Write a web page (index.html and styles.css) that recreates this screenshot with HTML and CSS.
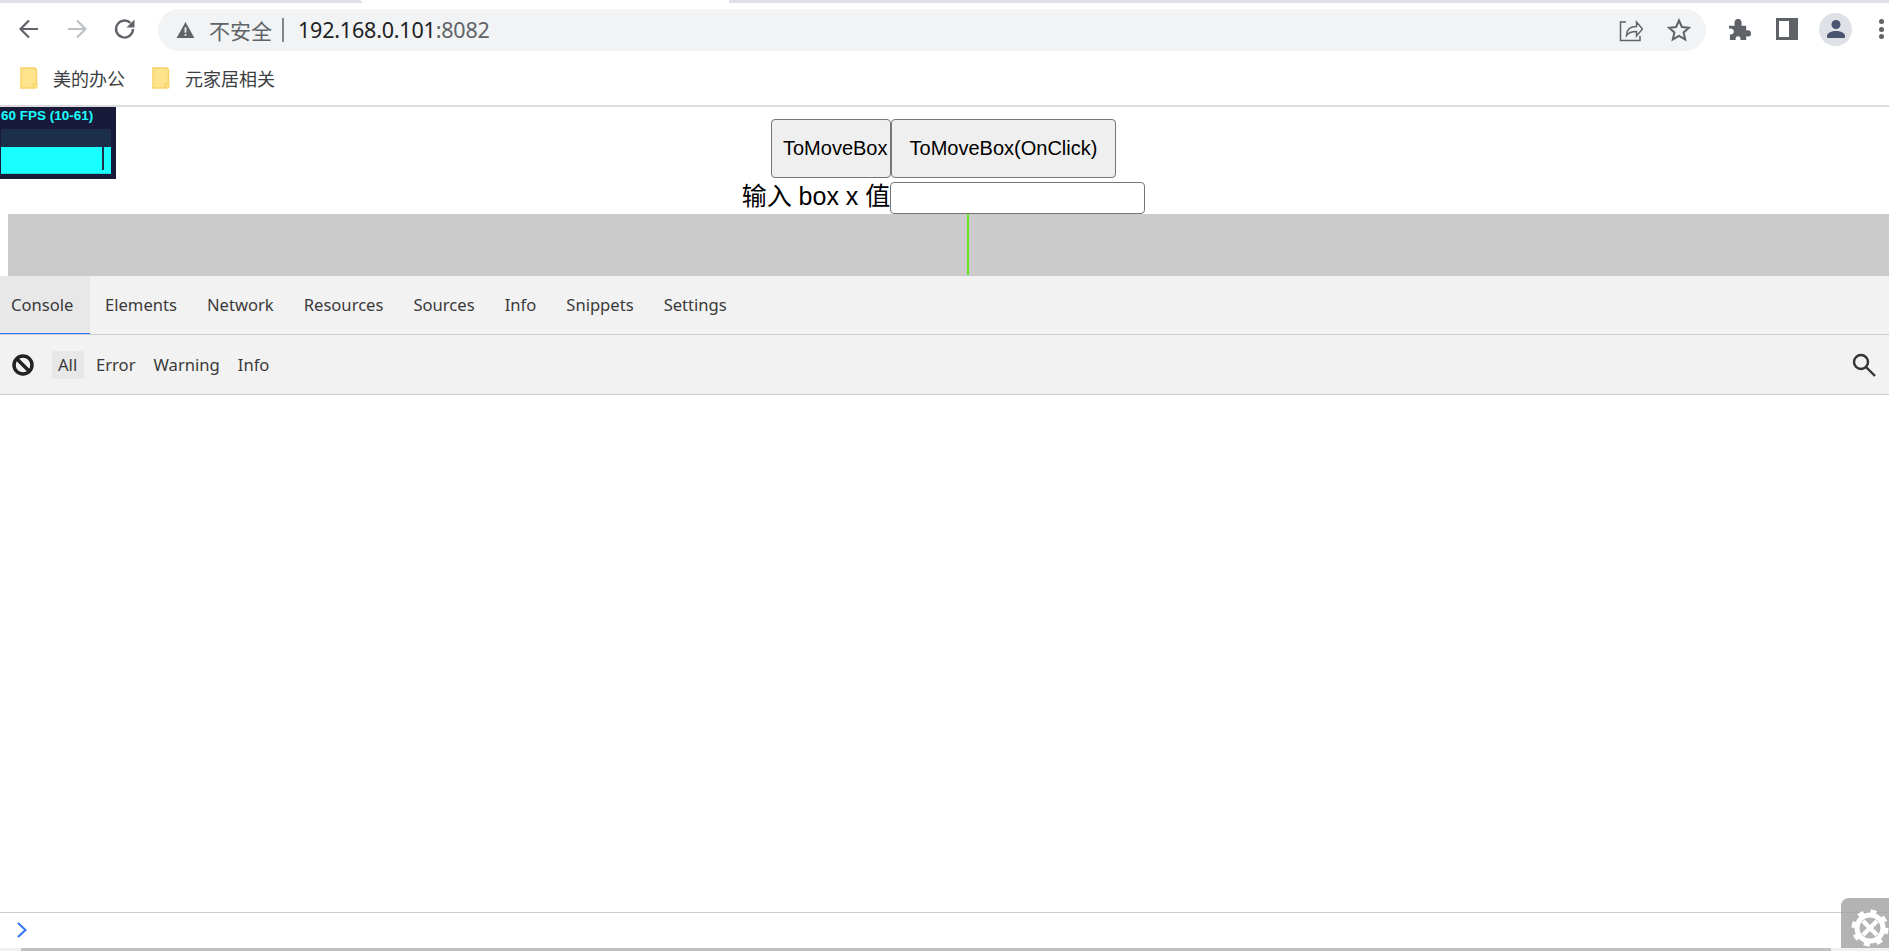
FILE: index.html
```html
<!DOCTYPE html>
<html lang="zh-CN">
<head>
<meta charset="utf-8">
<title>192.168.0.101:8082</title>
<link rel="stylesheet" href="styles.css">
</head>
<body>
<header class="browser">
  <div class="tabstrip"><div class="tab-active"></div></div>
  <div class="toolbar">
    <div class="nav">
      <svg class="ico" viewBox="0 0 24 24"><path d="M21 12H4M12 3.500 3.500 12l8.500 8.500" fill="none" stroke="#5f6368" stroke-width="2.200"/></svg>
      <svg class="ico" viewBox="0 0 24 24"><path d="M3 12h17M12 3.500l8.500 8.500-8.500 8.500" fill="none" stroke="#bdc1c6" stroke-width="2.200"/></svg>
      <svg class="ico" viewBox="0 0 24 24"><path d="M20 12a8.500 8.500 0 1 1-2.500-6" fill="none" stroke="#5f6368" stroke-width="2.300"/><path d="M21.500 2.500v8h-8z" fill="#5f6368"/></svg>
    </div>
    <div class="omnibox">
      <svg class="warn" viewBox="0 0 20 18"><path d="M10 0 20 18H0z" fill="#5f6368"/><path d="M9 6h2v6H9zM9 13.500h2v2H9z" fill="#f1f3f4"/></svg>
      <span class="insecure">不安全</span>
      <span class="sep"></span>
      <span class="url">192.168.0.101<span class="port">:8082</span></span>
      <span class="spacer"></span>
      <svg class="omni-ico" viewBox="0 0 24 24"><path d="M7 4H1.500v18.500h19.500V18M7.500 17.500c0-6 4-9 10-9V4l6 7-6 7v-4.500c-4.500 0-8 1-10 4z" fill="none" stroke="#5f6368" stroke-width="1.500"/></svg>
      <svg class="omni-ico star" viewBox="0 0 24 24"><path d="M12 2.500l2.900 6.500 7.100.7-5.400 4.700 1.600 7L12 17.800 5.800 21.400l1.600-7L2 9.700 9.100 9z" fill="none" stroke="#5f6368" stroke-width="2"/></svg>
    </div>
    <div class="actions">
      <svg class="puzzle" viewBox="0 0 24 24"><path d="M1 8h6C6 3 8 1 10.500 1S15 3 14 8h5v5c4-1 5 1 5 3.500S23 20 19 19v4h-6c.5-3-1-4-2.500-4S7.500 20 8 23H2v-6c3 .5 4-1 4-3s-2-3.500-5-3z" fill="#5f6368"/></svg>
      <svg class="panel" viewBox="0 0 22 22"><path d="M0 0h22v22H0z" fill="#5f6368"/><path d="M3 3h10v16H3z" fill="#fff"/></svg>
      <div class="avatar"><svg viewBox="0 0 20 20"><circle cx="10" cy="5.500" r="4.500" fill="#4a5670"/><path d="M1 19v-2c0-3.500 5-5 9-5s9 1.500 9 5v2z" fill="#4a5670"/></svg></div>
      <div class="dots"><i></i><i></i><i></i></div>
    </div>
  </div>
  <div class="bookmarks">
    <div class="bookmark">
      <svg class="folder" viewBox="0 0 18 22"><path d="M1 1h12.500a3 3 0 0 1 3 3v13h-3v4H1z" fill="#fde48c" stroke="#f7d264" stroke-width="1.500"/><path d="M13.500 21v-3.500h3.500V21z" fill="#fde48c" stroke="#f7d264"/></svg>
      <span>美的办公</span>
    </div>
    <div class="bookmark">
      <svg class="folder" viewBox="0 0 18 22"><path d="M1 1h12.500a3 3 0 0 1 3 3v13h-3v4H1z" fill="#fde48c" stroke="#f7d264" stroke-width="1.500"/><path d="M13.500 21v-3.500h3.500V21z" fill="#fde48c" stroke="#f7d264"/></svg>
      <span>元家居相关</span>
    </div>
  </div>
</header>

<main class="page">
  <div class="fps">
    <div class="fps-text">60 FPS (10-61)</div>
    <div class="fps-graph"><div class="fps-bar"><i class="fps-notch"></i></div></div>
  </div>
  <div class="controls">
    <div class="row row-buttons">
      <button class="btn btn-first">ToMoveBox</button>
      <button class="btn btn-second">ToMoveBox(OnClick)</button>
    </div>
    <div class="row row-input">
      <label class="box-label">输入 box x 值</label>
      <input class="box-input" type="text">
    </div>
  </div>
  <div class="track"><div class="marker"></div></div>
</main>

<section class="console">
  <nav class="tabs">
    <a class="tab active">Console</a><a class="tab">Elements</a><a class="tab">Network</a><a class="tab">Resources</a><a class="tab">Sources</a><a class="tab">Info</a><a class="tab">Snippets</a><a class="tab">Settings</a>
  </nav>
  <div class="filters">
    <svg class="clear" viewBox="0 0 24 24"><circle cx="12" cy="12" r="9" fill="none" stroke="#222" stroke-width="3.500"/><path d="M5.500 5.500l13 13" stroke="#222" stroke-width="3.500"/></svg>
    <a class="filter on">All</a><a class="filter">Error</a><a class="filter">Warning</a><a class="filter">Info</a>
    <span class="spacer"></span>
    <svg class="search" viewBox="0 0 24 24"><circle cx="9" cy="9" r="7" fill="none" stroke="#333" stroke-width="2.400"/><path d="M14 14l9 9" stroke="#333" stroke-width="2.400"/></svg>
  </div>
  <div class="log"></div>
  <div class="prompt">
    <svg class="chevron" viewBox="0 0 10 16"><path d="M1 1l7.500 7L1 15" fill="none" stroke="#2f74f0" stroke-width="2"/></svg>
  </div>
  <div class="hscroll"><div class="hthumb"></div></div>
  <div class="tool">
    <svg viewBox="0 0 48 50"><g fill="none" stroke="#fff"><circle cx="29" cy="30" r="13" stroke-width="5"/><circle cx="29" cy="30" r="16.500" stroke-width="4" stroke-dasharray="6 6.960"/><path d="M22 23l14 14M36 23 22 37" stroke-width="4.500"/></g></svg>
  </div>
</section>
</body>
</html>
```

FILE: styles.css
```css
* { box-sizing: border-box; }
html, body { margin: 0; height: 951px; overflow: hidden; background: #fff; }
body { display: flex; flex-direction: column; position: relative; font-family: "Liberation Sans", "Noto Sans CJK SC", sans-serif; }

.browser { flex: none; height: 107px; border-bottom: 2px solid #dcdcdc; }
.tabstrip { height: 3px; background: #dee1e6; }
.tab-active { margin-left: 361px; width: 368px; height: 3px; background: #fff; border-radius: 0 0 0 3px; }
.toolbar { height: 49px; display: flex; align-items: center; padding: 3px 0 0 0; }
.nav { width: 158px; display: flex; padding-left: 17px; gap: 24px; flex: none; }
.ico { width: 24px; height: 24px; }
.omnibox { width: 1548px; height: 42px; margin-top: 1px; background: #f1f3f4; border-radius: 21px; display: flex; align-items: center; padding: 0 15px 0 18px; flex: none; font-family: "Noto Sans", "Noto Sans CJK SC", sans-serif; }
.warn { width: 19px; height: 16px; flex: none; }
.insecure { margin-left: 14px; font-size: 21px; color: #5f6368; font-family: "Noto Sans CJK SC", sans-serif; }
.sep { width: 2px; height: 24px; margin: 0 14px 0 10px; background: #80868b; }
.url { font-size: 21.500px; color: #202124; letter-spacing: -0.2px; }
.port { color: #5f6368; }
.spacer { flex: 1; }
.omni-ico { width: 24px; height: 24px; flex: none; }
.star { margin-left: 24px; }
.actions { flex: 1; display: flex; align-items: center; padding-left: 22px; }
.puzzle { width: 23px; height: 23px; margin-right: 25px; }
.panel { width: 22px; height: 22px; margin-right: 21px; }
.avatar { width: 33px; height: 33px; border-radius: 50%; background: #dee1e6; display: flex; align-items: center; justify-content: center; margin-right: 27px; flex: none; }
.avatar svg { width: 20px; height: 20px; }
.dots { display: flex; flex-direction: column; gap: 2.500px; }
.dots i { width: 5px; height: 5px; border-radius: 50%; background: #5f6368; }
.bookmarks { height: 53px; display: flex; align-items: flex-start; padding: 9px 0 0 20px; gap: 27px; font-family: "Noto Sans CJK SC", sans-serif; font-size: 18px; color: #3c4043; }
.bookmark { display: flex; align-items: center; gap: 15px; height: 34px; }
.folder { width: 18px; height: 22px; flex: none; }

.page { flex: none; height: 169px; position: relative; }
.fps { position: absolute; left: 0; top: 0; width: 116px; height: 72px; background: #191a3a; padding: 0 5px 5px 1px; }
.fps-text { height: 22px; font-size: 13.500px; font-weight: 700; line-height: 17px; color: #19ffff; white-space: nowrap; }
.fps-graph { height: 45px; background: #1b2f4a; padding-top: 18px; }
.fps-bar { height: 27px; background: #19ffff; display: flex; justify-content: flex-end; padding-right: 7px; border-bottom: 1px solid #17dcdc; }
.fps-notch { width: 2px; height: 23px; background: #1b2f4a; }
.controls { height: 107px; width: 1887px; padding-top: 12px; }
.row { display: flex; justify-content: center; }
.row-buttons { height: 63px; }
.row-input { height: 32px; align-items: center; }
.btn { height: 59px; padding: 0; background: #efefef; border: 1px solid #767676; border-radius: 4px; font: 20px "Liberation Sans", sans-serif; color: #000; white-space: nowrap; }
.btn-first { width: 120px; padding: 0 2px 0 11px; text-align: left; }
.btn-second { width: 225px; }
.box-label { font-size: 25px; line-height: 32px; color: #000; white-space: nowrap; margin-top: -4px; }
.box-input { width: 255px; height: 32px; padding: 0; background: #fff; border: 1px solid #767676; border-radius: 4px; }
.track { height: 62px; margin-left: 8px; background: #cbcbcb; padding-left: 959px; }
.marker { width: 2px; height: 61px; background: #66e625; }

.console { flex: 1; min-height: 0; display: flex; flex-direction: column; position: relative; font-family: "Noto Sans", sans-serif; font-size: 16.600px; color: #3a3a3a; }
.tabs { flex: none; height: 59px; display: flex; background: #f2f2f2; border-bottom: 1px solid #ccc; }
.tab { height: 58px; padding: 0 15px; line-height: 58px; white-space: nowrap; }
.tab.active { width: 90px; padding: 0 11px; background: #e8e8e8; border-bottom: 1px solid #2f74f0; }
.filters { flex: none; height: 60px; display: flex; align-items: center; gap: 6px; padding: 0 13px 0 11px; background: #f2f2f2; border-bottom: 1px solid #ccc; }
.clear { width: 24px; height: 24px; margin-right: 11px; flex: none; }
.filter { padding: 0 6px; height: 28px; line-height: 28px; }
.filter.on { background: #e8e8e8; width: 32px; }
.search { width: 24px; height: 24px; flex: none; }
.log { flex: 1; background: #fff; }
.prompt { flex: none; height: 36px; border-top: 1px solid #ccc; padding: 9px 0 0 17px; background: #fff; }
.chevron { display: block; width: 10px; height: 16px; }
.hscroll { flex: none; height: 3px; background: #f1f1f1; padding-left: 21px; }
.hthumb { width: 1810px; height: 3px; background: #c1c1c1; }
.tool { position: absolute; right: 0; bottom: 3px; width: 48px; height: 50px; background: rgba(160,160,160,.8); border-radius: 8px 0 0 0; overflow: hidden; }
.tool svg { display: block; width: 48px; height: 50px; }
```
